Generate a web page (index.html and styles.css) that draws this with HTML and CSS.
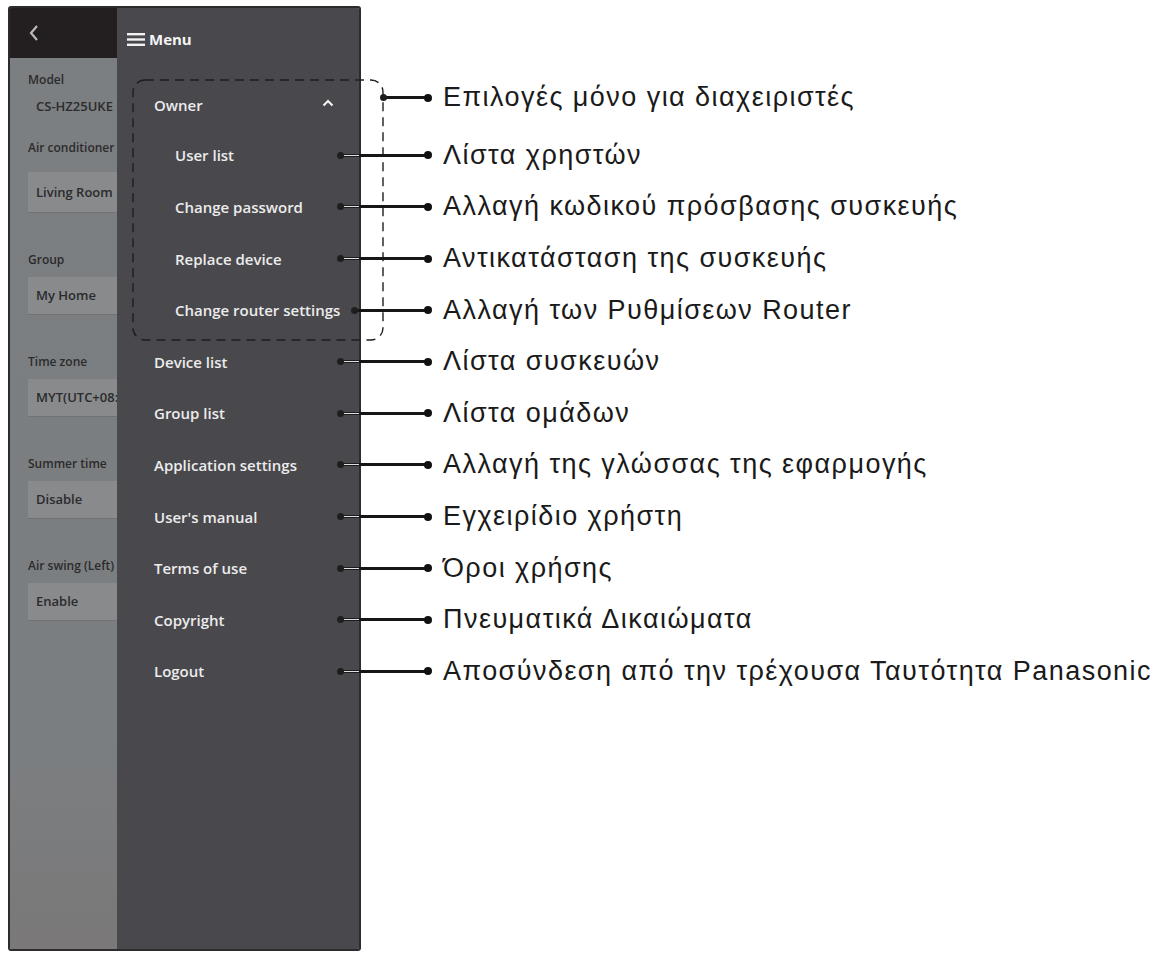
FILE: index.html
```html
<!DOCTYPE html>
<html lang="el">
<head>
    <meta charset="UTF-8">
    <meta name="viewport" content="width=device-width, initial-scale=1.0">
    <title>Menu</title>
    <link rel="stylesheet" href="styles.css">
</head>
<body>
    <div class="figure">
        <div class="phone">
            <!-- settings screen behind the drawer -->
            <div class="side">
                <div class="side-head">
                    <svg class="back" width="10" height="16" viewBox="0 0 10 16"><polyline points="8,1 2,8 8,15" fill="none" stroke="#b9b9b9" stroke-width="2.2"/></svg>
                </div>
                <div class="field field-plain">
                    <div class="field-label">Model</div>
                    <div class="field-value">CS-HZ25UKE</div>
                </div>
                <div class="field field-wide">
                    <div class="field-label">Air conditioner</div>
                    <div class="field-box">Living Room</div>
                </div>
                <div class="field">
                    <div class="field-label">Group</div>
                    <div class="field-box">My Home</div>
                </div>
                <div class="field">
                    <div class="field-label">Time zone</div>
                    <div class="field-box">MYT(UTC+08:00)</div>
                </div>
                <div class="field">
                    <div class="field-label">Summer time</div>
                    <div class="field-box">Disable</div>
                </div>
                <div class="field">
                    <div class="field-label">Air swing (Left)</div>
                    <div class="field-box">Enable</div>
                </div>
            </div>

            <!-- drawer menu -->
            <div class="menu">
                <div class="menu-head">
                    <svg width="18" height="13" viewBox="0 0 18 13"><rect y="0" width="18" height="2.4" fill="#f2f2f2"/><rect y="5.3" width="18" height="2.4" fill="#f2f2f2"/><rect y="10.6" width="18" height="2.4" fill="#f2f2f2"/></svg>
                    <span>Menu</span>
                </div>
                <ul class="menu-list">
                    <li class="menu-item menu-group">Owner
                        <svg class="chevron" width="12" height="8" viewBox="0 0 12 8"><polyline points="1.5,6.5 6,2 10.5,6.5" fill="none" stroke="#f2f2f2" stroke-width="2.2"/></svg>
                    </li>
                    <li class="menu-item sub">User list</li>
                    <li class="menu-item sub">Change password</li>
                    <li class="menu-item sub">Replace device</li>
                    <li class="menu-item sub">Change router settings</li>
                    <li class="menu-item">Device list</li>
                    <li class="menu-item">Group list</li>
                    <li class="menu-item">Application settings</li>
                    <li class="menu-item">User's manual</li>
                    <li class="menu-item">Terms of use</li>
                    <li class="menu-item">Copyright</li>
                    <li class="menu-item">Logout</li>
                </ul>
            </div>
        </div>

        <!-- dashed frame round the owner-only entries -->
        <svg class="owner-frame" width="262" height="272" viewBox="0 0 262 272">
            <rect x="1" y="1" width="250" height="260" rx="12" fill="none" stroke="#1e1e1e" stroke-width="1.4" stroke-dasharray="9 6"/>
        </svg>

        <ul class="notes">
            <li class="note note-owner"><span class="lead"></span><span class="note-text">Επιλογές μόνο για διαχειριστές</span></li>
            <li class="note"><span class="lead"></span><span class="note-text">Λίστα χρηστών</span></li>
            <li class="note"><span class="lead"></span><span class="note-text">Αλλαγή κωδικού πρόσβασης συσκευής</span></li>
            <li class="note"><span class="lead"></span><span class="note-text">Αντικατάσταση της συσκευής</span></li>
            <li class="note note-short"><span class="lead"></span><span class="note-text">Αλλαγή των Ρυθμίσεων Router</span></li>
            <li class="note"><span class="lead"></span><span class="note-text">Λίστα συσκευών</span></li>
            <li class="note"><span class="lead"></span><span class="note-text">Λίστα ομάδων</span></li>
            <li class="note"><span class="lead"></span><span class="note-text">Αλλαγή της γλώσσας της εφαρμογής</span></li>
            <li class="note"><span class="lead"></span><span class="note-text">Εγχειρίδιο χρήστη</span></li>
            <li class="note"><span class="lead"></span><span class="note-text">Όροι χρήσης</span></li>
            <li class="note"><span class="lead"></span><span class="note-text">Πνευματικά Δικαιώματα</span></li>
            <li class="note"><span class="lead"></span><span class="note-text">Αποσύνδεση από την τρέχουσα Ταυτότητα Panasonic</span></li>
        </ul>
    </div>
</body>
</html>
```

FILE: styles.css
```css
body {
    margin: 0;
    background-color: #ffffff;
    font-family: "Open Sans", "Noto Sans", sans-serif;
}
ul {
    list-style: none;
    margin: 0;
    padding: 0;
}
.figure {
    position: relative;
    display: flex;
    align-items: flex-start;
    padding: 6px 0 0 8px;
}

/* phone frame */
.phone {
    display: flex;
    width: 349px;
    height: 941px;
    border: 2px solid #2c2c2e;
    border-radius: 3px;
    overflow: hidden;
    flex: none;
}
.side {
    width: 107px;
    flex: none;
    background: linear-gradient(#7c7f81, #7b7e80 80%, #7a7879);
    overflow: hidden;
    white-space: nowrap;
}
.side-head {
    height: 50px;
    background-color: #231f20;
    display: flex;
    align-items: center;
    padding-left: 19px;
}
.field {
    margin-bottom: 39px;
    color: #2b2b2c;
    font-size: 13px;
    font-weight: 600;
}
.field-plain {
    margin-top: 14px;
    margin-bottom: 16px;
}
.field-label {
    height: 16px;
    line-height: 16px;
    padding-left: 18px;
    font-size: 12px;
}
.field-value {
    height: 36px;
    line-height: 36px;
    padding-left: 26px;
}
.field-box {
    margin: 9px 0 0 18px;
    height: 37px;
    line-height: 36px;
    padding-left: 8px;
    background-color: #888a8c;
    border-bottom: 1px solid #6f7173;
}
.field-wide .field-box {
    margin-top: 16px;
    height: 40px;
    line-height: 40px;
}

/* drawer */
.menu {
    flex: 1;
    background-color: #49484c;
    color: #ececec;
}
.menu-head {
    height: 62px;
    display: flex;
    align-items: center;
    gap: 4px;
    padding-left: 10px;
    font-size: 15px;
    font-weight: 700;
    color: #f4f4f4;
}
.menu-list {
    margin-top: 8px;
}
.menu-item {
    position: relative;
    height: 51.6px;
    display: flex;
    align-items: center;
    padding-left: 37px;
    font-size: 15px;
    font-weight: 600;
}
.menu-item.sub {
    padding-left: 58px;
}
.menu-group {
    padding-top: 3px;
    box-sizing: border-box;
}
.chevron {
    position: absolute;
    left: 205px;
    top: 21px;
}

.owner-frame {
    position: absolute;
    left: 132px;
    top: 79px;
}

/* callouts */
.notes {
    margin-left: -21px;
    margin-top: 72px;
    position: relative;
}
.note {
    height: 51.6px;
    display: flex;
    align-items: center;
    white-space: nowrap;
}
.note-owner {
    margin-top: -6px;
    margin-bottom: 6px;
}
.lead {
    position: relative;
    flex: none;
    width: 88px;
    height: 3px;
    background:
        linear-gradient(to right, transparent 0 19px, #161616 19px),
        linear-gradient(#1c1c1c 0 1px, #dedede 1px 2px, #1c1c1c 2px);
}
.lead::before {
    content: '';
    position: absolute;
    left: -3px;
    top: -2px;
    width: 7px;
    height: 7px;
    border-radius: 50%;
    background-color: #1e1e1e;
}
.lead::after {
    content: '';
    position: absolute;
    right: -4px;
    top: -2.5px;
    width: 8px;
    height: 8px;
    border-radius: 50%;
    background-color: #111111;
}
.note-owner .lead {
    margin-left: 43px;
    width: 45px;
    background: #161616;
}
.note-short .lead {
    margin-left: 14px;
    width: 74px;
    background: #161616;
}
.note-text {
    margin-left: 15px;
    font-family: "Liberation Sans", Arial, sans-serif;
    font-size: 27px;
    letter-spacing: 1.45px;
    color: #1a1a1a;
}
```
